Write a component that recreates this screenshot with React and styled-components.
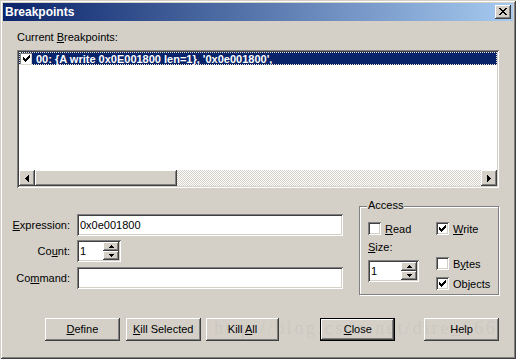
import React from 'react';
import styled, { createGlobalStyle, css } from 'styled-components';

const FACE = '#d4d0c8';
const SHADOW = '#808080';
const DARK = '#404040';
const LIGHT = '#ffffff';
const NAVY = '#0a246a';

const Global = createGlobalStyle`
  html, body { margin: 0; padding: 0; background: ${FACE}; }
  body { font-family: "Liberation Sans", Arial, sans-serif; font-size: 11px; color: #000; }
  * { box-sizing: border-box; }
`;

const raised = css`
  box-shadow: inset -1px -1px ${DARK}, inset 1px 1px ${LIGHT}, inset -2px -2px ${SHADOW}, inset 2px 2px ${FACE};
`;
const sunken = css`
  box-shadow: inset 1px 1px ${SHADOW}, inset -1px -1px ${LIGHT}, inset 2px 2px ${DARK}, inset -2px -2px ${FACE};
`;

const Window = styled.div`
  position: relative;
  width: 516px;
  height: 359px;
  padding: 3px;
  background: ${FACE};
  box-shadow: inset 1px 1px ${FACE}, inset -1px -1px ${DARK}, inset 2px 2px ${LIGHT}, inset -2px -2px ${SHADOW};
  display: flex;
  flex-direction: column;
  overflow: hidden;
`;

const TitleBar = styled.div`
  height: 18px;
  display: flex;
  align-items: center;
  justify-content: space-between;
  padding: 0 2px 0 2px;
  background: linear-gradient(to right, ${NAVY}, #a6caf0);
`;

const Title = styled.span`
  color: #fff;
  font-weight: bold;
  font-size: 12px;
  line-height: 18px;
`;

const CloseBox = styled.div`
  width: 16px;
  height: 14px;
  background: ${FACE};
  ${raised};
  display: flex;
  align-items: center;
  justify-content: center;
  padding-bottom: 1px;
`;

const Body = styled.div`
  flex: 1;
  display: flex;
  flex-direction: column;
  padding: 10px 14px 0 14px;
`;

const Label = styled.div`
  line-height: 13px;
  height: 13px;
  margin-bottom: ${p => p.$mb || 0}px;
  margin-top: ${p => p.$mt || 0}px;
  white-space: nowrap;
`;

const U = styled.span`
  text-decoration: underline;
  text-underline-offset: 1px;
`;

const ListBox = styled.div`
  height: 138px;
  background: #fff;
  ${sunken};
  padding: 2px;
  display: flex;
  flex-direction: column;
`;

const Rows = styled.div`
  flex: 1;
`;

const Row = styled.div`
  height: 13px;
  display: flex;
  align-items: center;
  gap: 4px;
  padding-left: 1px;
  background: ${p => (p.$selected ? NAVY : 'transparent')};
  color: ${p => (p.$selected ? '#fff' : '#000')};
  font-weight: bold;
  outline: 1px dotted #e8e4dc;
  outline-offset: -1px;
  white-space: nowrap;
`;

const SmallCheck = styled.div`
  width: 12px;
  height: 12px;
  background: #fff;
  box-shadow: inset 1px 1px ${SHADOW}, inset -1px -1px ${FACE};
  display: flex;
  align-items: center;
  justify-content: center;
`;

const HScroll = styled.div`
  height: 16px;
  display: flex;
  background-color: #fff;
  background-image: repeating-conic-gradient(${FACE} 0 25%, #fff 0 50%);
  background-size: 2px 2px;
`;

const ScrollBtn = styled.div`
  width: 16px;
  height: 16px;
  flex: none;
  background: ${FACE};
  ${raised};
  display: flex;
  align-items: center;
  justify-content: center;
`;

const Thumb = styled.div`
  width: ${p => p.$w}px;
  height: 16px;
  background: ${FACE};
  ${raised};
`;

const Track = styled.div`
  flex: 1;
`;

const Lower = styled.div`
  margin-top: 18px;
  display: flex;
  align-items: flex-start;
  gap: 16px;
`;

const Fields = styled.div`
  width: 326px;
  padding-top: 8px;
  display: grid;
  grid-template-columns: 60px 266px;
  grid-auto-rows: 22px;
  row-gap: 4px;
`;

const FieldLabel = styled.div`
  display: flex;
  align-items: center;
  justify-content: flex-end;
  padding-right: 7px;
  margin-top: ${p => p.$mt || 0}px;
  white-space: nowrap;
`;

const TextField = styled.div`
  height: 22px;
  background: #fff;
  ${sunken};
  padding: 0 3px;
  display: flex;
  align-items: center;
  margin-top: ${p => p.$mt || 0}px;
  white-space: nowrap;
`;

const SpinField = styled.div`
  width: ${p => p.$w}px;
  height: 22px;
  background: #fff;
  ${sunken};
  padding: 2px;
  display: flex;
  margin-top: ${p => p.$mt || 0}px;
`;

const SpinValue = styled.div`
  flex: 1;
  padding-left: 1px;
  display: flex;
  align-items: center;
`;

const SpinButtons = styled.div`
  width: 16px;
  display: flex;
  flex-direction: column;
`;

const SpinBtn = styled.div`
  flex: 1;
  background: ${FACE};
  ${raised};
  display: flex;
  align-items: center;
  justify-content: center;
`;

const Group = styled.div`
  position: relative;
  width: 140px;
  height: 89px;
  border: 1px solid ${SHADOW};
  box-shadow: inset 1px 1px 0 ${LIGHT}, 1px 1px 0 ${LIGHT};
  padding: 15px 0 0 8px;
  display: grid;
  grid-template-columns: 68px 1fr;
`;

const Legend = styled.span`
  position: absolute;
  top: -8px;
  left: 7px;
  padding: 0 1px;
  line-height: 13px;
  background: ${FACE};
`;

const Column = styled.div`
  display: flex;
  flex-direction: column;
`;

const CheckRow = styled.div`
  display: flex;
  align-items: center;
  gap: 4px;
  height: 13px;
  margin-top: ${p => p.$mt || 0}px;
  white-space: nowrap;
`;

const Box = styled.div`
  width: 13px;
  height: 13px;
  flex: none;
  background: #fff;
  ${sunken};
  display: flex;
  align-items: center;
  justify-content: center;
`;

const ButtonRow = styled.div`
  margin-top: 23px;
  display: flex;
`;

const Button = styled.div`
  position: relative;
  z-index: 1;
  width: ${p => p.$w || 75}px;
  height: 23px;
  margin-left: ${p => p.$ml || 0}px;
  background: ${FACE};
  ${raised};
  border: ${p => (p.$default ? '1px solid #000' : 'none')};
  display: flex;
  align-items: center;
  justify-content: center;
  white-space: nowrap;
  padding-bottom: 1px;
`;

const Watermark = styled.div`
  position: absolute;
  z-index: 2;
  left: 214px;
  top: 318px;
  font-family: "Liberation Serif", "Times New Roman", serif;
  font-size: 18px;
  letter-spacing: 2.6px;
  color: rgba(120, 115, 105, 0.11);
  pointer-events: none;
  white-space: nowrap;
`;

const CheckMark = () => (
  <svg width="7" height="7" viewBox="0 0 7 7" shapeRendering="crispEdges">
    <path d="M6 0h1v3h-1v1h-1v1h-1v1h-1v1h-1v-1h-1v-1h-1v-3h1v1h1v1h1v-1h1v-1h1z" fill="#000" />
  </svg>
);

const Tri = ({ dir }) => {
  if (dir === 'left')
    return (
      <svg width="4" height="7" viewBox="0 0 4 7" shapeRendering="crispEdges">
        <path d="M3 0h1v7h-1v-1h-1v-1h-1v-1h-1v-1h1v-1h1v-1h1z" fill="#000" />
      </svg>
    );
  if (dir === 'right')
    return (
      <svg width="4" height="7" viewBox="0 0 4 7" shapeRendering="crispEdges">
        <path d="M0 0h1v1h1v1h1v1h1v1h-1v1h-1v1h-1v1h-1z" fill="#000" />
      </svg>
    );
  if (dir === 'up')
    return (
      <svg width="5" height="3" viewBox="0 0 5 3" shapeRendering="crispEdges">
        <path d="M2 0h1v1h1v1h1v1h-5v-1h1v-1h1z" fill="#000" />
      </svg>
    );
  return (
    <svg width="5" height="3" viewBox="0 0 5 3" shapeRendering="crispEdges">
      <path d="M0 0h5v1h-1v1h-1v1h-1v-1h-1v-1h-1z" fill="#000" />
    </svg>
  );
};

const CloseGlyph = () => (
  <svg width="8" height="7" viewBox="0 0 8 7" shapeRendering="crispEdges">
    <path
      d="M0 0h2v1h1v1h2v-1h1v-1h2v1h-1v1h-1v1h-1v1h1v1h1v1h1v1h-2v-1h-1v-1h-2v1h-1v1h-2v-1h1v-1h1v-1h1v-1h-1v-1h-1v-1h-1z"
      fill="#000"
    />
  </svg>
);

const Spinner = ({ value, width, mt }) => (
  <SpinField $w={width} $mt={mt}>
    <SpinValue>{value}</SpinValue>
    <SpinButtons>
      <SpinBtn>
        <Tri dir="up" />
      </SpinBtn>
      <SpinBtn>
        <Tri dir="down" />
      </SpinBtn>
    </SpinButtons>
  </SpinField>
);

const Check = ({ checked, children, mt }) => (
  <CheckRow $mt={mt}>
    <Box>{checked && <CheckMark />}</Box>
    <span>{children}</span>
  </CheckRow>
);

export default function App() {
  return (
    <>
      <Global />
      <Window>
        <TitleBar>
          <Title>Breakpoints</Title>
          <CloseBox>
            <CloseGlyph />
          </CloseBox>
        </TitleBar>
        <Body>
          <Label $mb={6}>
            Current <U>B</U>reakpoints:
          </Label>
          <ListBox>
            <Rows>
              <Row $selected>
                <SmallCheck>
                  <CheckMark />
                </SmallCheck>
                <span>00: {'{'}A write 0x0E001800 len=1{'}'}, '0x0e001800',</span>
              </Row>
            </Rows>
            <HScroll>
              <ScrollBtn>
                <Tri dir="left" />
              </ScrollBtn>
              <Thumb $w={142} />
              <Track />
              <ScrollBtn>
                <Tri dir="right" />
              </ScrollBtn>
            </HScroll>
          </ListBox>

          <Lower>
            <Fields>
              <FieldLabel>
                <span>
                  <U>E</U>xpression:
                </span>
              </FieldLabel>
              <TextField>0x0e001800</TextField>
              <FieldLabel>
                <span>
                  Co<U>u</U>nt:
                </span>
              </FieldLabel>
              <div>
                <Spinner value="1" width={44} />
              </div>
              <FieldLabel $mt={1}>
                <span>
                  Co<U>m</U>mand:
                </span>
              </FieldLabel>
              <TextField $mt={1} />
            </Fields>

            <Group>
              <Legend>Access</Legend>
              <Column>
                <Check>
                  <U>R</U>ead
                </Check>
                <Label $mt={6}>
                  <U>S</U>ize:
                </Label>
                <Spinner value="1" width={51} mt={6} />
              </Column>
              <Column>
                <Check checked>
                  <U>W</U>rite
                </Check>
                <Check mt={22}>
                  B<U>y</U>tes
                </Check>
                <Check checked mt={7}>
                  Objects
                </Check>
              </Column>
            </Group>
          </Lower>

          <ButtonRow>
            <Button $ml={28}>
              <span>
                <U>D</U>efine
              </span>
            </Button>
            <Button $ml={6}>
              <span>
                <U>K</U>ill Selected
              </span>
            </Button>
            <Button $ml={5} $w={74}>
              <span>
                Kill <U>A</U>ll
              </span>
            </Button>
            <Button $ml={41} $default>
              <span>
                <U>C</U>lose
              </span>
            </Button>
            <Button $ml={29}>
              <span>Help</span>
            </Button>
          </ButtonRow>
        </Body>
        <Watermark>http://blog.csdn.net/dire_666</Watermark>
      </Window>
    </>
  );
}
